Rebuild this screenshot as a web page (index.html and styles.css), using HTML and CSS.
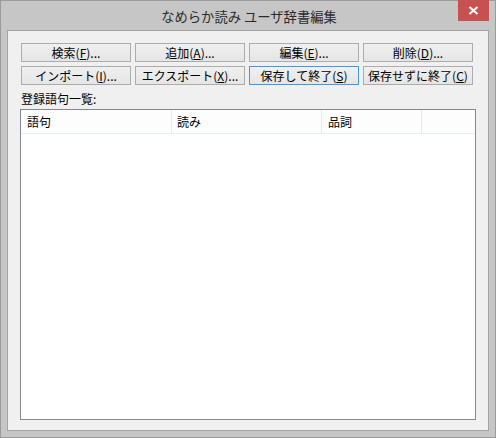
FILE: index.html
```html
<!DOCTYPE html>
<html lang="ja">
<head>
<meta charset="utf-8">
<title>なめらか読み ユーザ辞書編集</title>
<link rel="stylesheet" href="styles.css">
</head>
<body>
<div class="window">
  <div class="titlebar">
    <span class="title">なめらか読み ユーザ辞書編集</span>
    <div class="close">
      <svg width="11" height="9" viewBox="0 0 11 9"><path d="M1.5 1 L9.5 8 M9.5 1 L1.5 8" stroke="#fff" stroke-width="2" fill="none"/></svg>
    </div>
  </div>
  <div class="client">
    <div class="buttons">
      <div class="btn">検索(<u>F</u>)...</div>
      <div class="btn">追加(<u>A</u>)...</div>
      <div class="btn">編集(<u>E</u>)...</div>
      <div class="btn">削除(<u>D</u>)...</div>
      <div class="btn">インポート(<u>I</u>)...</div>
      <div class="btn">エクスポート(<u>X</u>)...</div>
      <div class="btn default">保存して終了(<u>S</u>)</div>
      <div class="btn">保存せずに終了(<u>C</u>)</div>
    </div>
    <div class="label">登録語句一覧:</div>
    <div class="listview">
      <div class="header">
        <div class="col c1">語句</div>
        <div class="col c2">読み</div>
        <div class="col c3">品詞</div>
        <div class="col c4"></div>
      </div>
    </div>
  </div>
</div>
</body>
</html>
```

FILE: styles.css
```css
html, body {
  margin: 0;
  padding: 0;
}
body {
  width: 496px;
  height: 438px;
  overflow: hidden;
  font-family: "Noto Sans CJK JP", "Noto Sans", sans-serif;
  font-size: 12px;
  color: #000;
}
.window {
  position: relative;
  box-sizing: border-box;
  width: 496px;
  height: 438px;
  border: 1px solid #9b9b9b;
  background: #c6c6c6;
  display: flex;
  flex-direction: column;
  padding: 0 6px 6px 6px;
}
.titlebar {
  height: 29px;
  display: flex;
  align-items: center;
  justify-content: center;
  flex-shrink: 0;
}
.title {
  font-size: 13.3px;
  color: #2b2b2b;
  line-height: 1;
  margin-top: 2px;
  margin-left: 2px;
}
.close {
  position: absolute;
  top: -1px;
  right: 6px;
  width: 31px;
  height: 21px;
  background: #c75050;
  display: flex;
  align-items: center;
  justify-content: center;
}
.client {
  flex: 1;
  border: 1px solid #a3a3a3;
  background: #f0f0f0;
  padding: 12px 12px 10px 12px;
  display: flex;
  flex-direction: column;
  min-height: 0;
}
.buttons {
  display: grid;
  grid-template-columns: repeat(4, 110px);
  grid-auto-rows: 19px;
  column-gap: 4px;
  row-gap: 4px;
  padding-left: 1px;
}
.btn {
  box-sizing: border-box;
  border: 1px solid #acacac;
  background: linear-gradient(#f0f0f0, #e5e5e5);
  display: flex;
  align-items: center;
  justify-content: center;
  line-height: 1;
  font-size: 12px;
  color: #000;
  white-space: nowrap;
}
.btn.default {
  border-color: #3c9ae8;
}
.btn u {
  text-underline-offset: 1px;
}
.label {
  margin-top: 4px;
  height: 19px;
  line-height: 19px;
  font-size: 12px;
  padding-left: 1px;
}
.listview {
  margin-top: 1px;
  flex: 1;
  border: 1px solid #828790;
  background: #fff;
}
.header {
  display: flex;
  height: 23px;
  border-bottom: 1px solid #e6eef9;
  background: #fdfdfd;
}
.col {
  box-sizing: border-box;
  height: 100%;
  border-right: 1px solid #e3e9f2;
  padding-left: 6px;
  display: flex;
  align-items: center;
  font-size: 12px;
  line-height: 1;
}
.c1 { width: 151px; }
.c2 { width: 150px; padding-left: 5px; }
.c3 { width: 100px; }
.c4 { flex: 1; border-right: none; }
```
